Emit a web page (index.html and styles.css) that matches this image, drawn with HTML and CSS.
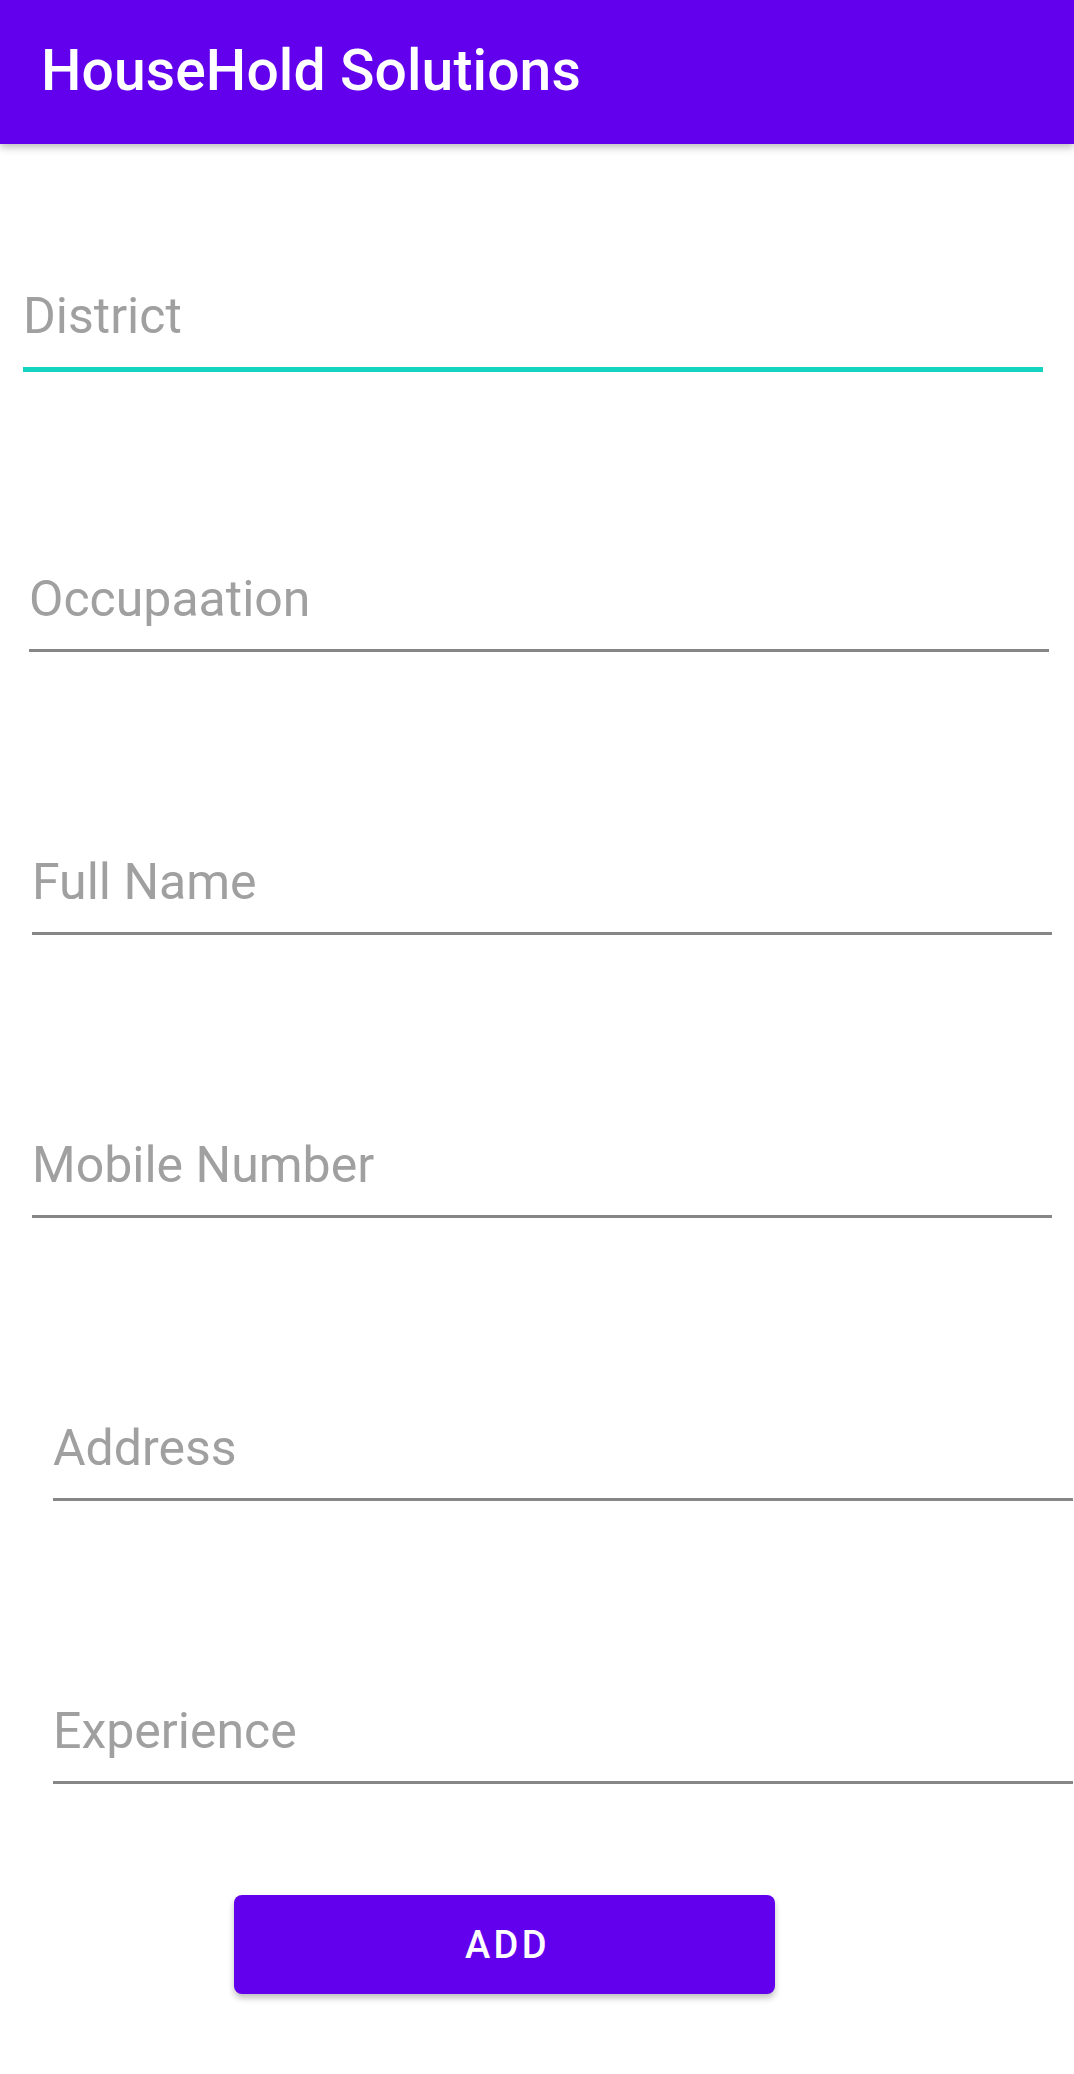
FILE: index.html
```html
<!DOCTYPE html>
<html lang="en">
<head>
<meta charset="utf-8">
<title>HouseHold Solutions</title>
<link rel="stylesheet" href="styles.css">
</head>
<body>
<header class="appbar">
  <h1 class="appbar-title">HouseHold Solutions</h1>
</header>
<main class="form">
  <div class="field field-focused field-l1"><span class="hint">District</span></div>
  <div class="field field-l2"><span class="hint">Occupaation</span></div>
  <div class="field field-l3"><span class="hint">Full Name</span></div>
  <div class="field field-l3"><span class="hint">Mobile Number</span></div>
  <div class="field field-l4"><span class="hint">Address</span></div>
  <div class="field field-l4"><span class="hint">Experience</span></div>
  <button class="add-btn" type="button">ADD</button>
</main>
</body>
</html>
```

FILE: styles.css
```css
html, body {
  margin: 0;
  padding: 0;
  background: #ffffff;
}
body {
  width: 1074px;
  height: 2074px;
  overflow: hidden;
  font-family: Roboto, "Liberation Sans", sans-serif;
}
.appbar {
  position: relative;
  z-index: 2;
  height: 144px;
  background: #6200ee;
  box-shadow: 0 3px 8px rgba(0, 0, 0, 0.28);
  display: flex;
  align-items: center;
  padding-left: 41px;
  box-sizing: border-box;
}
.appbar-title {
  margin: 0;
  margin-top: -4px;
  font-size: 57px;
  font-weight: 500;
  color: #ffffff;
  letter-spacing: 0.1px;
}
.form {
  display: flex;
  flex-direction: column;
  align-items: flex-start;
  gap: 200px;
  padding-top: 142px;
}
.field {
  width: 1020px;
  height: 60px;
  line-height: 60px;
  padding-bottom: 20px;
  border-bottom: 3px solid #868686;
  font-size: 50px;
  white-space: nowrap;
}
.field-focused {
  border-bottom: 5px solid #14d3bf;
  padding-bottom: 21px;
  margin-bottom: -3px;
}
.field-l1 { margin-left: 23px; }
.field-l2 { margin-left: 29px; }
.field-l3 { margin-left: 32px; }
.field-l4 { margin-left: 53px; }
.hint {
  color: #a0a0a0;
}
.add-btn {
  margin-top: -89px;
  margin-left: 234px;
  width: 541px;
  height: 99px;
  border: none;
  border-radius: 8px;
  background: #6200ee;
  color: #ffffff;
  font-family: Roboto, "Liberation Sans", sans-serif;
  font-size: 38px;
  font-weight: 500;
  letter-spacing: 3.4px;
  padding: 0 0 0 6px;
  box-shadow: 0 4px 6px rgba(0, 0, 0, 0.25);
}
```
